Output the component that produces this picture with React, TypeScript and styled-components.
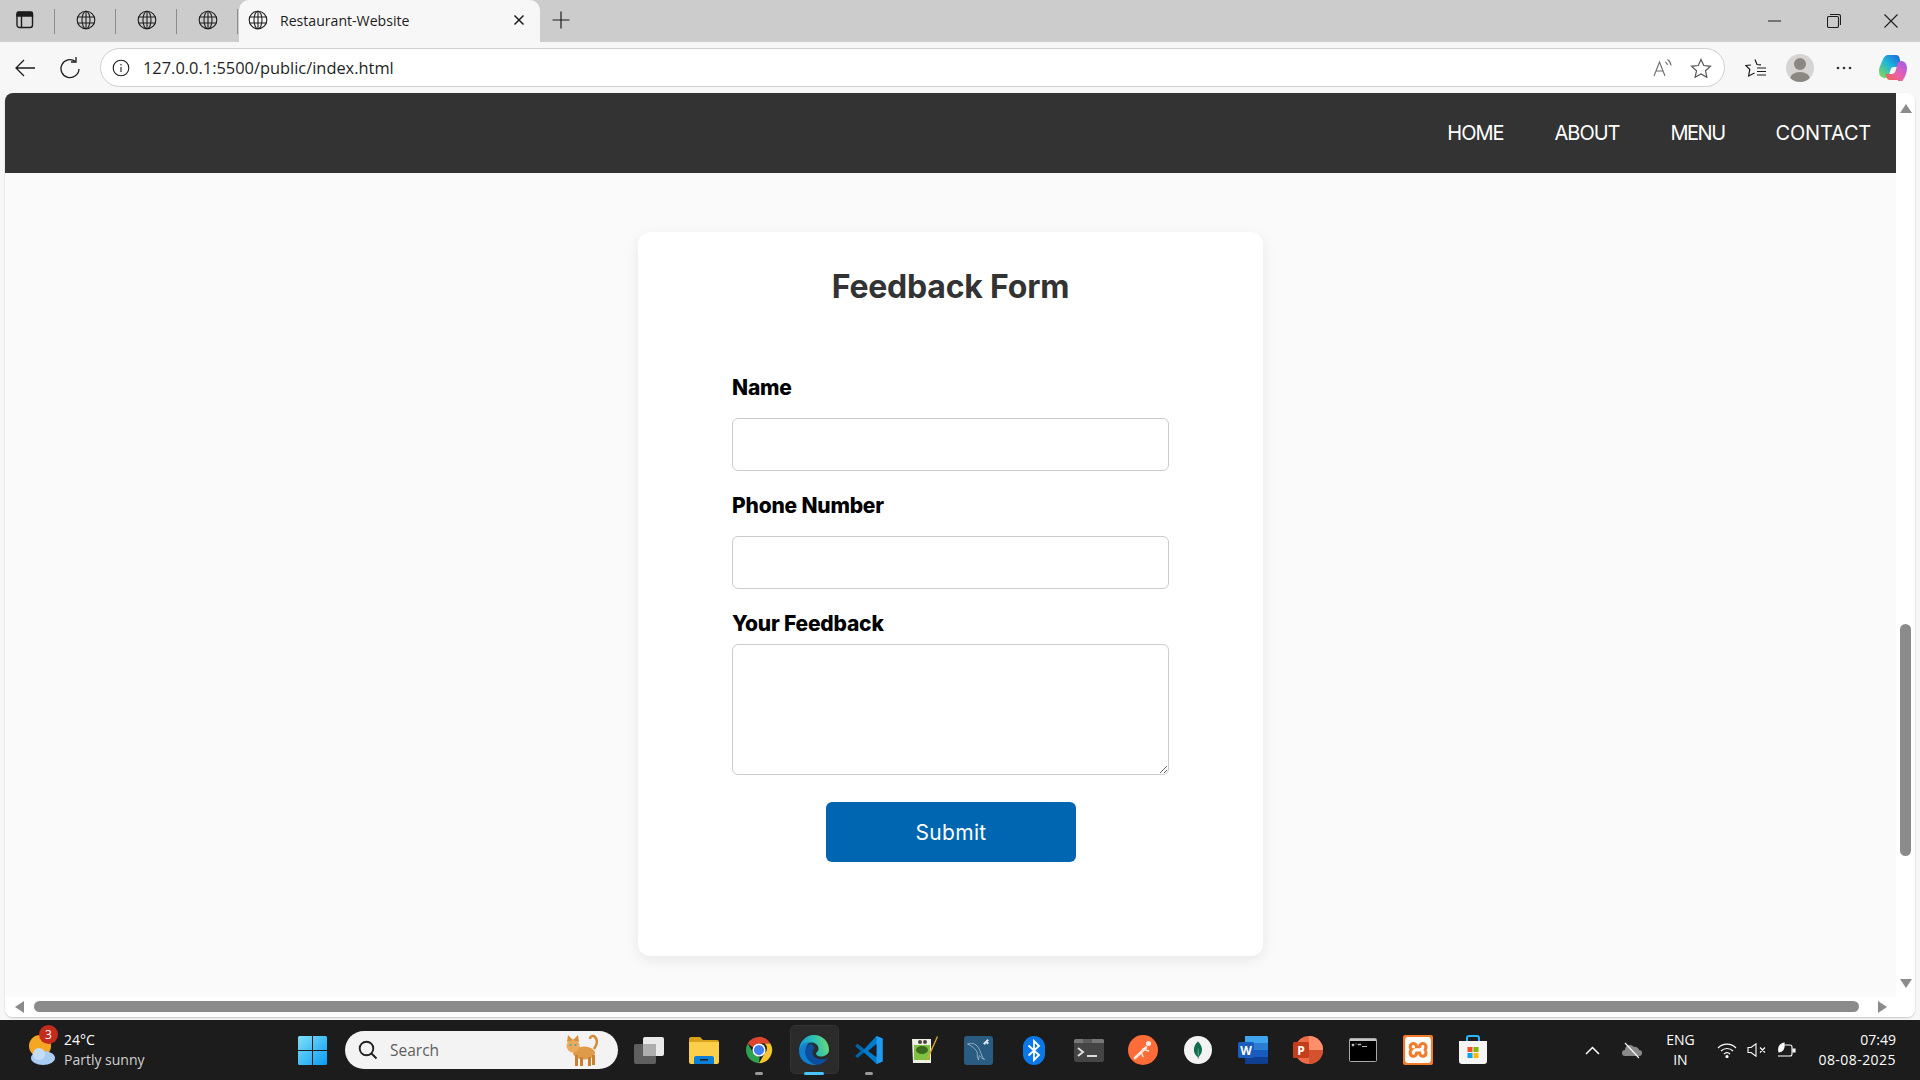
import React from "react";
import styled, { createGlobalStyle } from "styled-components";
import { SiMongodb, SiXampp } from "react-icons/si";

const GlobalStyle = createGlobalStyle`
  html, body {
    margin: 0;
    padding: 0;
    overflow: hidden;
    background: #f7f7f7;
  }
  * {
    box-sizing: border-box;
  }
`;

const Desktop = styled.div`
  width: 1920px;
  height: 1080px;
  display: flex;
  flex-direction: column;
  background: #f7f7f7;
  overflow: hidden;
  font-family: "Open Sans", "Liberation Sans", sans-serif;
`;

/* browser tabs */
const TabStrip = styled.div`
  height: 42px;
  flex: none;
  display: flex;
  align-items: center;
  background: #cccccc;
  color: #1d1d1d;
`;

const TabSlot = styled.div`
  width: 61px;
  height: 42px;
  padding-bottom: 2px;
  flex: none;
  display: flex;
  align-items: center;
  justify-content: center;
  position: relative;
  &::after {
    content: "";
    position: absolute;
    right: 0;
    top: 9px;
    height: 25px;
    width: 1px;
    background: #8b8b8b;
  }
`;

const SideSlot = styled(TabSlot)`
  width: 55px;
  padding-right: 6px;
`;

const ActiveTab = styled.div`
  width: 301px;
  height: 42px;
  margin-left: 1px;
  flex: none;
  display: flex;
  align-items: center;
  padding: 0 15px 2px 9px;
  background: #f7f7f7;
  border-radius: 10px 10px 0 0;
`;

const TabTitle = styled.span`
  flex: 1;
  margin-left: 12px;
  font-size: 14.1px;
  color: #1d1d1d;
  white-space: nowrap;
`;

const PlusSlot = styled.div`
  width: 42px;
  padding-bottom: 2px;
  display: flex;
  justify-content: center;
`;

const WindowControls = styled.div`
  margin-left: auto;
  display: flex;
  align-items: center;
  padding-right: 22px;
  gap: 43px;
`;

const MinGlyph = styled.svg`
  margin-right: 3px;
`;

/* address bar row */
const Toolbar = styled.div`
  height: 51px;
  flex: none;
  display: flex;
  align-items: center;
  padding-left: 15px;
  background: #f7f7f7;
  color: #1d1d1d;
`;

const NavGlyph = styled.div`
  width: 45px;
  flex: none;
  display: flex;
  align-items: center;
  justify-content: flex-start;
`;

const AddressBar = styled.div`
  width: 1625px;
  height: 39px;
  margin-left: -5px;
  flex: none;
  display: flex;
  align-items: center;
  padding: 0 12px 0 11px;
  background: #ffffff;
  border: 1px solid #cfcfcf;
  border-radius: 20px;
`;

const UrlText = styled.span`
  margin-left: 13px;
  font-size: 16.4px;
  color: #1f1f1f;
  white-space: nowrap;
`;

const BarEnd = styled.div`
  margin-left: auto;
  display: flex;
  align-items: center;
  gap: 17px;
`;

const ToolbarRight = styled.div`
  display: flex;
  align-items: center;
  flex: 1;
  padding-left: 20px;
  gap: 19px;
`;

const Avatar = styled.div`
  width: 28px;
  height: 28px;
  border-radius: 50%;
  overflow: hidden;
  background: #d6d4d2;
`;

const MoreDots = styled.svg`
  margin: 0 8px 0 3px;
`;

/* window viewport */
const Viewport = styled.div`
  flex: none;
  width: 1910px;
  height: 924px;
  margin: 0 0 3px 5px;
  display: grid;
  grid-template-columns: 1891px 19px;
  grid-template-rows: 904px 20px;
  background: #ffffff;
  border-radius: 8px;
  overflow: hidden;
  box-shadow: 0 1px 2px rgba(0, 0, 0, 0.2);
`;

const Page = styled.div`
  background: #fafafa;
  overflow: hidden;
`;

const Nav = styled.nav`
  height: 80px;
  display: flex;
  align-items: center;
  justify-content: flex-end;
  gap: 51px;
  padding-right: 25px;
  background: #333333;
`;

const NavLink = styled.a<{ $track: number }>`
  color: #ffffff;
  font-family: "Inter", sans-serif;
  font-size: 20px;
  font-weight: 400;
  letter-spacing: ${(p) => p.$track}px;
  text-decoration: none;
`;

const Card = styled.section`
  width: 625px;
  margin: 59px auto 0;
  padding: 31px 94px 94px;
  background: #ffffff;
  border-radius: 12px;
  box-shadow: 0 4px 14px rgba(0, 0, 0, 0.08);
`;

const Title = styled.h2`
  margin: 0 0 64px;
  font-family: "Inter", sans-serif;
  font-size: 32px;
  line-height: 48px;
  font-weight: 700;
  letter-spacing: -0.2px;
  color: #333333;
  text-align: center;
  white-space: nowrap;
`;

const Label = styled.label<{ $tight?: boolean }>`
  display: block;
  margin-bottom: ${(p) => (p.$tight ? "7px" : "17px")};
  font-family: "Inter", sans-serif;
  font-size: 21px;
  line-height: 26px;
  font-weight: 800;
  letter-spacing: -0.2px;
  color: #000000;
`;

const TextInput = styled.input`
  display: block;
  width: 100%;
  height: 53px;
  margin-bottom: 22px;
  border: 1px solid #cccccc;
  border-radius: 6px;
  background: #ffffff;
  outline: none;
`;

const TextArea = styled.textarea`
  display: block;
  width: 100%;
  height: 131px;
  margin-bottom: 27px;
  border: 1px solid #cccccc;
  border-radius: 6px;
  background: #ffffff;
  outline: none;
`;

const SubmitButton = styled.button`
  display: block;
  width: 250px;
  height: 60px;
  margin-left: 94px;
  border: none;
  border-radius: 6px;
  background: #0066b2;
  color: #ffffff;
  font-family: "Inter", sans-serif;
  font-size: 21px;
  font-weight: 400;
  letter-spacing: 0.3px;
`;

const VScroll = styled.div`
  display: flex;
  flex-direction: column;
  align-items: center;
  padding-top: 11px;
  background: #ffffff;
`;

const VThumb = styled.div`
  width: 11px;
  height: 232px;
  margin: 511px 0 123px;
  border-radius: 6px;
  background: #8b8b8b;
`;

const HScroll = styled.div`
  grid-column: 1 / span 2;
  display: flex;
  align-items: flex-start;
  padding: 4px 0 0 10px;
  background: #ffffff;
`;

const HThumb = styled.div`
  width: 1825px;
  height: 11px;
  margin: 0 19px 0 10px;
  border-radius: 6px;
  background: #8b8b8b;
`;

const Arrow = styled.div<{ $dir: "up" | "down" | "left" | "right" }>`
  width: 0;
  height: 0;
  flex: none;
  border-style: solid;
  border-color: transparent;
  ${(p) =>
    p.$dir === "up"
      ? "border-width: 0 6px 9px; border-bottom-color: #8b8b8b;"
      : p.$dir === "down"
      ? "border-width: 9px 6px 0; border-top-color: #8b8b8b;"
      : p.$dir === "left"
      ? "border-width: 6px 9px 6px 0; border-right-color: #8b8b8b;"
      : "border-width: 6px 0 6px 9px; border-left-color: #8b8b8b;"}
`;

/* windows taskbar */
const Taskbar = styled.div`
  height: 60px;
  flex: none;
  margin-top: auto;
  display: flex;
  align-items: center;
  background: #1c1c1c;
  color: #ffffff;
`;

const Weather = styled.div`
  width: 285px;
  flex: none;
  display: flex;
  align-items: center;
  padding-left: 26px;
`;

const WeatherIcon = styled.div`
  width: 32px;
  height: 32px;
  position: relative;
  flex: none;
`;

const Badge = styled.span`
  position: absolute;
  top: -9px;
  left: 13px;
  width: 19px;
  height: 19px;
  border-radius: 50%;
  background: #c42b1c;
  color: #ffffff;
  font-size: 12px;
  line-height: 19px;
  text-align: center;
`;

const WeatherText = styled.div`
  margin-left: 6px;
  font-size: 14px;
  line-height: 20px;
  color: #ffffff;
`;

const Muted = styled.div`
  color: #d0d0d0;
`;

const StartSlot = styled.div`
  width: 55px;
  flex: none;
  display: flex;
  justify-content: center;
`;

const SearchPill = styled.div`
  width: 273px;
  height: 38px;
  margin: 0 4px 0 5px;
  flex: none;
  display: flex;
  align-items: center;
  padding: 0 18px 0 13px;
  border-radius: 19px;
  background: #f3f3f3;
`;

const SearchLabel = styled.span`
  flex: 1;
  margin-left: 12px;
  font-size: 15.5px;
  color: #5e5e5e;
`;

const TaskSlot = styled.div<{ $active?: boolean }>`
  width: 54.9px;
  height: 60px;
  flex: none;
  display: flex;
  align-items: center;
  justify-content: center;
  position: relative;
  ${(p) =>
    p.$active &&
    `&::before {
      content: "";
      position: absolute;
      left: 3px;
      right: 3px;
      top: 5px;
      bottom: 6px;
      border-radius: 5px;
      background: #2b2b2b;
      border: 1px solid #333333;
    }`}
  & > svg {
    position: relative;
  }
`;

const RunDot = styled.span<{ $active?: boolean }>`
  position: absolute;
  left: 50%;
  bottom: 5px;
  width: ${(p) => (p.$active ? "20px" : "8px")};
  height: 3px;
  margin-left: ${(p) => (p.$active ? "-10px" : "-4px")};
  border-radius: 2px;
  background: ${(p) => (p.$active ? "#4cc2ff" : "#9a9a9a")};
`;

const Tray = styled.div`
  margin-left: auto;
  display: flex;
  align-items: center;
  padding-right: 24px;
  font-size: 14px;
`;

const TrayGlyph = styled.div<{ $w: number }>`
  width: ${(p) => p.$w}px;
  flex: none;
  display: flex;
  justify-content: center;
`;

const Lang = styled.div`
  width: 56px;
  flex: none;
  text-align: center;
  line-height: 20px;
`;

const Clock = styled.div`
  margin-left: 12px;
  text-align: right;
  line-height: 20px;
`;

const DateLine = styled.div`
  letter-spacing: 0.45px;
`;

const Globe = () => (
  <svg width="20" height="20" viewBox="0 0 20 20" fill="none" stroke="#1d1d1d" strokeWidth="1.1">
    <circle cx="10" cy="10" r="8.8" />
    <ellipse cx="10" cy="10" rx="4" ry="8.8" />
    <path d="M10 1.2v17.6M1.5 7h17M1.5 13h17" />
  </svg>
);

const ChromeLogo = () => (
  <svg width="30" height="30" viewBox="0 0 48 48">
    <path d="M24 3a21 21 0 0 1 18.2 10.5H24a10.500 10.500 0 0 0-9.700 6.500L6 13.500A21 21 0 0 1 24 3z" fill="#e0452f" />
    <path d="M42.200 13.500A21 21 0 0 1 24 45l9.100-15.700a10.500 10.500 0 0 0 0-15.800z" fill="#f7c52c" />
    <path d="M24 45A21 21 0 0 1 6 13.500l9.100 15.800a10.500 10.500 0 0 0 9.900 5.200z" fill="#2fa04d" />
    <circle cx="24" cy="24" r="10.500" fill="#fff" />
    <circle cx="24" cy="24" r="8.200" fill="#3f7ff0" />
  </svg>
);

const EdgeLogo = () => (
  <svg width="32" height="32" viewBox="0 0 32 32">
    <defs>
      <linearGradient id="edgeTop" x1="0" y1="0.6" x2="1" y2="0.4">
        <stop offset="0" stopColor="#1793d8" />
        <stop offset="0.55" stopColor="#2bc0b4" />
        <stop offset="1" stopColor="#6fdc72" />
      </linearGradient>
    </defs>
    <path fill="url(#edgeTop)" d="M16 1C25 1 31 8 31 16c0 4-4 6.500-8 6.500-3.500 0-5-1.500-5-3 0-.6.500-1 1-1.500 1-1 1.500-2 1.500-3.500 0-3.500-3.500-6-7-6C7 8.500 3 13 1 17 1 8 7.500 1 16 1z" />
    <path fill="#0f7fd0" d="M1 17c2-7 7-9 12-9-4 2-5.500 6-5.500 10 0 6 4.500 11 11.500 13C9 32 1 26 1 17z" />
    <path fill="#0b4f9e" d="M13 9.500c-4 2-5.500 5.500-5.500 8.500 0 6 4.500 11 11.500 13 4.500-.5 8.500-3 10.500-7-2 1-4.500 1.500-7 1.200-5-.5-8-3.500-8-7 0-1.500.6-2.800 2-3.700-.8-2.500-2-4-3.500-5z" />
  </svg>
);

const VsCodeLogo = () => (
  <svg width="30" height="30" viewBox="0 0 32 32">
    <path fill="#0065a9" d="M1.200 11.600 3.600 9.400l6 4.500 3.800 3-3.800 2.900-6 4.700-2.400-2.200L7 17z" />
    <path fill="#007acc" d="M30.500 3.800 24 1 9 17l15 14 6.500-2.800z" />
    <path fill="#1f9cf0" d="M24 1l6.500 2.800v24.400L24 31z" />
    <path fill="#1c1c1c" d="M24 9.700 15 17l9 6.800z" />
  </svg>
);

const TaskIcon = ({ name }: { name: string }) => {
  switch (name) {
    case "views":
      return (
        <svg width="30" height="28" viewBox="0 0 30 28">
          <rect x="9" y="1" width="21" height="19" rx="2" fill="#e9e9e9" />
          <rect x="0" y="8" width="22" height="20" rx="2" fill="#5f5f5f" />
          <rect x="9" y="8" width="13" height="12" fill="#aeaeae" />
        </svg>
      );
    case "files":
      return (
        <svg width="30" height="28" viewBox="0 0 30 28">
          <path d="M0 3a2 2 0 0 1 2-2h9l3 3h14a2 2 0 0 1 2 2v6H0z" fill="#d9a01a" />
          <path d="M0 6h30v20a2 2 0 0 1-2 2H2a2 2 0 0 1-2-2z" fill="#fbcf4a" />
          <path d="M5 22a2 2 0 0 1 2-2h16a2 2 0 0 1 2 2v6H5z" fill="#0c7fd6" />
          <rect x="11" y="23" width="8" height="1.500" fill="#1c1c1c" />
        </svg>
      );
    case "chrome":
      return <ChromeLogo />;
    case "edge":
      return <EdgeLogo />;
    case "vscode":
      return <VsCodeLogo />;
    case "notepad":
      return (
        <svg width="28" height="28" viewBox="0 0 28 28">
          <path d="M2 3h19v24H3z" fill="#f0f0e4" />
          <rect x="4" y="9" width="16" height="15" fill="#7fc241" />
          <ellipse cx="12" cy="14" rx="6" ry="4" fill="#3d6a1e" />
          <circle cx="10" cy="6" r="2" fill="#444" />
          <circle cx="15" cy="6" r="2" fill="#444" />
          <path d="M27 0 17 22l-1.500 3 3-2.500L28 1z" fill="#d8a32c" />
        </svg>
      );
    case "mysql":
      return (
        <svg width="29" height="29" viewBox="0 0 29 29">
          <rect width="29" height="29" rx="3" fill="#2a5b80" />
          <path d="M3.500 8c4-1.500 7-.5 9.500 2 2.500 2.500 3.500 6 4.500 9 .6 1.800 1.600 3 3 4.500-2-.6-3.800-2-5-4-.8 1.500-1 3-.8 4.500-1.400-2-1.800-4.500-1.200-7-1.800-4-5-7-10-9z" fill="none" stroke="#a9c0cf" strokeWidth="0.800" />
          <path d="M19 7.500 23.500 3l1.500 1.500-1.500 1L25 7l-1.500 1.500L22 7l-1 2z" fill="#dfe8ee" />
        </svg>
      );
    case "bluetooth":
      return (
        <svg width="22" height="29" viewBox="0 0 22 29">
          <rect width="22" height="29" rx="11" fill="#0a78e6" />
          <path d="M5.500 9.500 16 19l-5 5V5l5 5-10.500 9.500" fill="none" stroke="#fff" strokeWidth="1.800" />
        </svg>
      );
    case "terminal":
      return (
        <svg width="30" height="23" viewBox="0 0 30 23">
          <rect width="30" height="23" rx="2" fill="#454545" />
          <path d="M0 2a2 2 0 0 1 2-2h26a2 2 0 0 1 2 2v2H0z" fill="#777" />
          <rect x="9" y="0" width="9" height="4" fill="#5c5c5c" />
          <path d="M4 9l5 4-5 4" fill="none" stroke="#ddd" strokeWidth="2" />
          <rect x="13" y="16" width="10" height="2" fill="#ddd" />
        </svg>
      );
    case "postman":
      return (
        <svg width="30" height="30" viewBox="0 0 30 30">
          <circle cx="15" cy="15" r="15" fill="#ff6c37" />
          <circle cx="20.500" cy="8.500" r="2.600" fill="#ffe9df" />
          <path d="M7 23 18 12.500" stroke="#ffe9df" strokeWidth="2.600" strokeLinecap="round" />
          <path d="M13 17l2 4.500M15 14l5.500 2" stroke="#ffe9df" strokeWidth="1.500" strokeLinecap="round" />
        </svg>
      );
    case "mongodb":
      return (
        <svg width="28" height="28" viewBox="0 0 28 28">
          <circle cx="14" cy="14" r="14" fill="#f3f3f3" />
          <foreignObject x="5" y="5" width="18" height="18">
            <SiMongodb size={18} color="#0f6e4c" />
          </foreignObject>
        </svg>
      );
    case "word":
      return (
        <svg width="30" height="28" viewBox="0 0 30 28">
          <path d="M7 0h21a2 2 0 0 1 2 1v6H7z" fill="#41a5ee" />
          <rect x="7" y="7" width="23" height="7" fill="#2b7cd3" />
          <rect x="7" y="14" width="23" height="7" fill="#185abd" />
          <path d="M7 21h23v6a1 1 0 0 1-1 1H7z" fill="#103f91" />
          <rect y="6" width="16" height="16" rx="1.500" fill="#1a5dbe" />
          <text x="8" y="19" textAnchor="middle" fontSize="12" fontWeight="700" fill="#fff" fontFamily="Open Sans">W</text>
        </svg>
      );
    case "powerpoint":
      return (
        <svg width="30" height="28" viewBox="0 0 30 28">
          <circle cx="16" cy="14" r="14" fill="#ed6c47" />
          <path d="M16 0a14 14 0 0 1 14 14H16z" fill="#ff8f6b" />
          <path d="M16 14h14a14 14 0 0 1-14 14z" fill="#d35230" />
          <rect y="6" width="16" height="16" rx="1.500" fill="#c43e1c" />
          <text x="8" y="19" textAnchor="middle" fontSize="12" fontWeight="700" fill="#fff" fontFamily="Open Sans">P</text>
        </svg>
      );
    case "cmd":
      return (
        <svg width="28" height="24" viewBox="0 0 28 24">
          <rect x="0.500" y="0.500" width="27" height="23" rx="1" fill="#000" stroke="#a8a8a8" />
          <rect x="1" y="1" width="26" height="2" fill="#c7c7c7" />
          <path d="M3 6h2v2H3zM6 6h2M9 6h3v1H9z" fill="#bbb" stroke="#bbb" strokeWidth="0.500" />
          <rect x="13" y="8" width="5" height="1" fill="#bbb" />
        </svg>
      );
    case "xampp":
      return (
        <svg width="30" height="30" viewBox="0 0 30 30">
          <rect width="30" height="30" rx="2" fill="#f07c2c" />
          <foreignObject x="2" y="2" width="26" height="26">
            <SiXampp size={26} color="#ffffff" />
          </foreignObject>
        </svg>
      );
    case "store":
      return (
        <svg width="30" height="30" viewBox="0 0 30 30">
          <path d="M9 6V3a2 2 0 0 1 2-2h8a2 2 0 0 1 2 2v3" fill="none" stroke="#29b6f6" strokeWidth="2" />
          <path d="M1 6h28v20a3 3 0 0 1-3 3H4a3 3 0 0 1-3-3z" fill="#f5f5f5" />
          <rect x="9.500" y="12" width="5" height="5" fill="#f25022" />
          <rect x="15.500" y="12" width="5" height="5" fill="#7fba00" />
          <rect x="9.500" y="18" width="5" height="5" fill="#00a4ef" />
          <rect x="15.500" y="18" width="5" height="5" fill="#ffb900" />
        </svg>
      );
    default:
      return null;
  }
};

const taskApps = [
  "views", "files", "chrome", "edge", "vscode", "notepad", "mysql", "bluetooth",
  "terminal", "postman", "mongodb", "word", "powerpoint", "cmd", "xampp", "store",
];

export default function App() {
  return (
    <>
      <GlobalStyle />
      <Desktop>
        <TabStrip>
          <SideSlot>
            <svg width="18" height="18" viewBox="0 0 18 18" fill="none" stroke="#1d1d1d" strokeWidth="1.400">
              <rect x="1" y="1.500" width="15.500" height="15" rx="2.500" />
              <path d="M1 2.500a1.500 1.500 0 0 1 1.500-1.500h12.500a1.500 1.500 0 0 1 1.500 1.500V5H1z" fill="#1d1d1d" />
              <path d="M5.500 5v11" />
            </svg>
          </SideSlot>
          <TabSlot><Globe /></TabSlot>
          <TabSlot><Globe /></TabSlot>
          <TabSlot><Globe /></TabSlot>
          <ActiveTab>
            <Globe />
            <TabTitle>Restaurant-Website</TabTitle>
            <svg width="12" height="12" viewBox="0 0 12 12" stroke="#1d1d1d" strokeWidth="1.500">
              <path d="M1.500 1.500l9 9M10.500 1.500l-9 9" />
            </svg>
          </ActiveTab>
          <PlusSlot>
            <svg width="18" height="18" viewBox="0 0 18 18" stroke="#1d1d1d" strokeWidth="1.200">
              <path d="M9 0.500v17M0.500 9h17" />
            </svg>
          </PlusSlot>
          <WindowControls>
            <MinGlyph width="13" height="2" viewBox="0 0 13 2" stroke="#1d1d1d"><path d="M0 1h13" /></MinGlyph>
            <svg width="14" height="14" viewBox="0 0 14 14" fill="none" stroke="#1d1d1d" strokeWidth="1.100">
              <rect x="0.500" y="2.500" width="11" height="11" rx="1.500" />
              <path d="M3 0.500h8.500a2 2 0 0 1 2 2V11" />
            </svg>
            <svg width="14" height="14" viewBox="0 0 14 14" stroke="#1d1d1d" strokeWidth="1.100">
              <path d="M0.500 0.500l13 13M13.500 0.500l-13 13" />
            </svg>
          </WindowControls>
        </TabStrip>

        <Toolbar>
          <NavGlyph>
            <svg width="21" height="18" viewBox="0 0 21 18" fill="none" stroke="#1d1d1d" strokeWidth="1.300">
              <path d="M20 9H1M9 1 1 9l8 8" />
            </svg>
          </NavGlyph>
          <NavGlyph>
            <svg width="20" height="22" viewBox="0 0 20 22" fill="none" stroke="#1d1d1d" strokeWidth="1.300">
              <path d="M15.500 4.500A9 9 0 1 0 19 12" />
              <path d="M16 0v5h-5" />
            </svg>
          </NavGlyph>
          <AddressBar>
            <svg width="18" height="18" viewBox="0 0 18 18" fill="none" stroke="#1d1d1d" strokeWidth="1.100">
              <circle cx="9" cy="9" r="7.800" />
              <path d="M9 8v5M9 5v1.400" />
            </svg>
            <UrlText>127.0.0.1:5500/public/index.html</UrlText>
            <BarEnd>
              <svg width="20" height="19" viewBox="0 0 20 19" fill="none" stroke="#6d6d6d" strokeWidth="1.100">
                <path d="M1 18 6.500 4 12 18M3 13h7" />
                <path d="M12.500 4a5 5 0 0 1 2 3M14.500 1.500a8 8 0 0 1 3.500 6" />
              </svg>
              <svg width="22" height="20" viewBox="0 0 22 20" fill="none" stroke="#555" strokeWidth="1.200">
                <path d="M11 1.500 13.800 7.500l6.700.8-5 4.500 1.400 6.500L11 16l-5.900 3.300 1.400-6.500-5-4.500 6.700-.8z" />
              </svg>
            </BarEnd>
          </AddressBar>
          <ToolbarRight>
            <svg width="22" height="20" viewBox="0 0 22 20" fill="none" stroke="#1d1d1d" strokeWidth="1.200">
              <path d="M10 1.500 12 6.500l4 .4M6 7 .8 7.500l4 4L3.600 18 9.500 15" />
              <path d="M12 10h9M12 13.500h9M12 17h9" />
            </svg>
            <Avatar>
              <svg width="28" height="28" viewBox="0 0 28 28">
                <circle cx="14" cy="10" r="6" fill="#8b8883" />
                <ellipse cx="14" cy="25" rx="10" ry="7" fill="#8b8883" />
              </svg>
            </Avatar>
            <MoreDots width="16" height="4" viewBox="0 0 16 4" fill="#333">
              <circle cx="2" cy="2" r="1.300" />
              <circle cx="8" cy="2" r="1.300" />
              <circle cx="14" cy="2" r="1.300" />
            </MoreDots>
            <svg width="28" height="27" viewBox="0 0 28 27">
              <defs>
                <linearGradient id="copA" x1="0" y1="1" x2="1" y2="0">
                  <stop offset="0" stopColor="#8edb45" />
                  <stop offset="0.5" stopColor="#20b8d8" />
                  <stop offset="1" stopColor="#1a5be0" />
                </linearGradient>
                <linearGradient id="copB" x1="0" y1="1" x2="1" y2="0">
                  <stop offset="0" stopColor="#f2643c" />
                  <stop offset="0.5" stopColor="#e95fae" />
                  <stop offset="1" stopColor="#9a5cf0" />
                </linearGradient>
              </defs>
              <path fill="url(#copA)" d="M9 1h8c2 0 3 1 3.500 3L23 13h-8c-2 0-3 1-3.500 3L10 21c-.5 2-2 3-4 3-3 0-6-2-6-7 0-4 3-9 4-12C5 3 7 1 9 1z" />
              <path fill="url(#copB)" d="M19 26h-8c-2 0-3-1-3.500-3l-1-3h6c2 0 3.500-1 4-3l2-7c.5-2 2-3 4-3 3 0 5.500 3 5.500 7 0 4-2 9-4 12-1 2-3 3-5 3z" />
            </svg>
          </ToolbarRight>
        </Toolbar>

        <Viewport>
          <Page>
            <Nav>
              <NavLink href="#home" $track={-1}>HOME</NavLink>
              <NavLink href="#about" $track={-1}>ABOUT</NavLink>
              <NavLink href="#menu" $track={-1.5}>MENU</NavLink>
              <NavLink href="#contact" $track={-0.2}>CONTACT</NavLink>
            </Nav>
            <Card>
              <Title>Feedback Form</Title>
              <form onSubmit={(e) => e.preventDefault()}>
                <Label htmlFor="name">Name</Label>
                <TextInput id="name" type="text" />
                <Label htmlFor="phone">Phone Number</Label>
                <TextInput id="phone" type="tel" />
                <Label htmlFor="feedback" $tight>Your Feedback</Label>
                <TextArea id="feedback" />
                <SubmitButton type="submit">Submit</SubmitButton>
              </form>
            </Card>
          </Page>
          <VScroll>
            <Arrow $dir="up" />
            <VThumb />
            <Arrow $dir="down" />
          </VScroll>
          <HScroll>
            <Arrow $dir="left" />
            <HThumb />
            <Arrow $dir="right" />
          </HScroll>
        </Viewport>

        <Taskbar>
          <Weather>
            <WeatherIcon>
              <svg width="32" height="32" viewBox="0 0 32 32">
                <circle cx="14" cy="12" r="11" fill="#f5a623" />
                <ellipse cx="17" cy="24" rx="12" ry="7" fill="#a9cdf2" />
                <circle cx="13" cy="20" r="6" fill="#c4def7" />
              </svg>
              <Badge>3</Badge>
            </WeatherIcon>
            <WeatherText>
              <div>24°C</div>
              <Muted>Partly sunny</Muted>
            </WeatherText>
          </Weather>
          <StartSlot>
            <svg width="29" height="29" viewBox="0 0 29 29">
              <defs>
                <linearGradient id="winLogo" x1="0" y1="0" x2="1" y2="1">
                  <stop offset="0" stopColor="#7fe0f7" />
                  <stop offset="1" stopColor="#0a9cf5" />
                </linearGradient>
              </defs>
              <path fill="url(#winLogo)" d="M0 1.500A1.500 1.500 0 0 1 1.500 0H14v14H0zM15 0h12.500A1.500 1.500 0 0 1 29 1.500V14H15zM0 15h14v14H1.500A1.500 1.500 0 0 1 0 27.500zM15 15h14v12.500a1.500 1.500 0 0 1-1.500 1.500H15z" />
            </svg>
          </StartSlot>
          <SearchPill>
            <svg width="20" height="20" viewBox="0 0 20 20" fill="none" stroke="#222" strokeWidth="1.900">
              <circle cx="8.500" cy="8.500" r="6.800" />
              <path d="M13.500 13.500 18.500 18.500" />
            </svg>
            <SearchLabel>Search</SearchLabel>
            <svg width="36" height="34" viewBox="0 0 36 34">
              <path d="M30 16c3-4 4-9 1-12-2-2-5-1-5 2" fill="none" stroke="#d08a35" strokeWidth="2.500" />
              <ellipse cx="20" cy="20" rx="11" ry="6.500" fill="#df9a4a" />
              <circle cx="9" cy="13" r="6.500" fill="#eba95c" />
              <path d="M3 9 4 2l5 5zM15 9l-1-7-5 5z" fill="#d98e3d" />
              <path d="M11 22h3v11h-3zM16 24h3v9h-3zM24 24h3v9h-3zM28 22h3v10h-3z" fill="#c9812f" />
              <circle cx="6.500" cy="12" r="1" fill="#3aa7b8" />
              <circle cx="11.500" cy="12" r="1" fill="#3aa7b8" />
            </svg>
          </SearchPill>
          {taskApps.map((app) => (
            <TaskSlot key={app} $active={app === "edge"}>
              <TaskIcon name={app} />
              {(app === "chrome" || app === "vscode") && <RunDot />}
              {app === "edge" && <RunDot $active />}
            </TaskSlot>
          ))}
          <Tray>
            <TrayGlyph $w={40}>
              <svg width="15" height="9" viewBox="0 0 15 9" fill="none" stroke="#fff" strokeWidth="1.500">
                <path d="M1 8l6.500-6.500L14 8" />
              </svg>
            </TrayGlyph>
            <TrayGlyph $w={40}>
              <svg width="20" height="17" viewBox="0 0 20 17">
                <path d="M3 14a3 3 0 0 1 0-6 5 5 0 0 1 9-3 4 4 0 0 1 5 3 3 3 0 0 1 0 6z" fill="#8a8a8a" />
                <path d="M3 1l14 15" stroke="#fff" strokeWidth="1.100" />
              </svg>
            </TrayGlyph>
            <Lang>
              <div>ENG</div>
              <div>IN</div>
            </Lang>
            <TrayGlyph $w={38}>
              <svg width="20" height="16" viewBox="0 0 20 16" fill="none" stroke="#fff" strokeWidth="1.200">
                <path d="M1 6a12.500 12.500 0 0 1 18 0M4 9a8.500 8.500 0 0 1 12 0M7 12a4 4 0 0 1 6 0" />
                <circle cx="10" cy="14.500" r="1" fill="#fff" />
              </svg>
            </TrayGlyph>
            <TrayGlyph $w={22}>
              <svg width="20" height="14" viewBox="0 0 20 14" fill="none" stroke="#fff" strokeWidth="1.100">
                <path d="M1 4.500h3L9 .8v12.400L4 9.500H1zM13 4.500l5 5M18 4.500l-5 5" />
              </svg>
            </TrayGlyph>
            <TrayGlyph $w={38}>
              <svg width="20" height="17" viewBox="0 0 20 17" fill="none" stroke="#fff" strokeWidth="1.100">
                <path d="M8 3h5a2 2 0 0 1 2 2v7a2 2 0 0 1-2 2H1" />
                <path d="M16 7h2v3h-2z" fill="#fff" />
                <path d="M7 1C3 2 1 5 2 10c3 0 6-3 5-9z" fill="#fff" />
              </svg>
            </TrayGlyph>
            <Clock>
              <div>07:49</div>
              <DateLine>08-08-2025</DateLine>
            </Clock>
          </Tray>
        </Taskbar>
      </Desktop>
    </>
  );
}
